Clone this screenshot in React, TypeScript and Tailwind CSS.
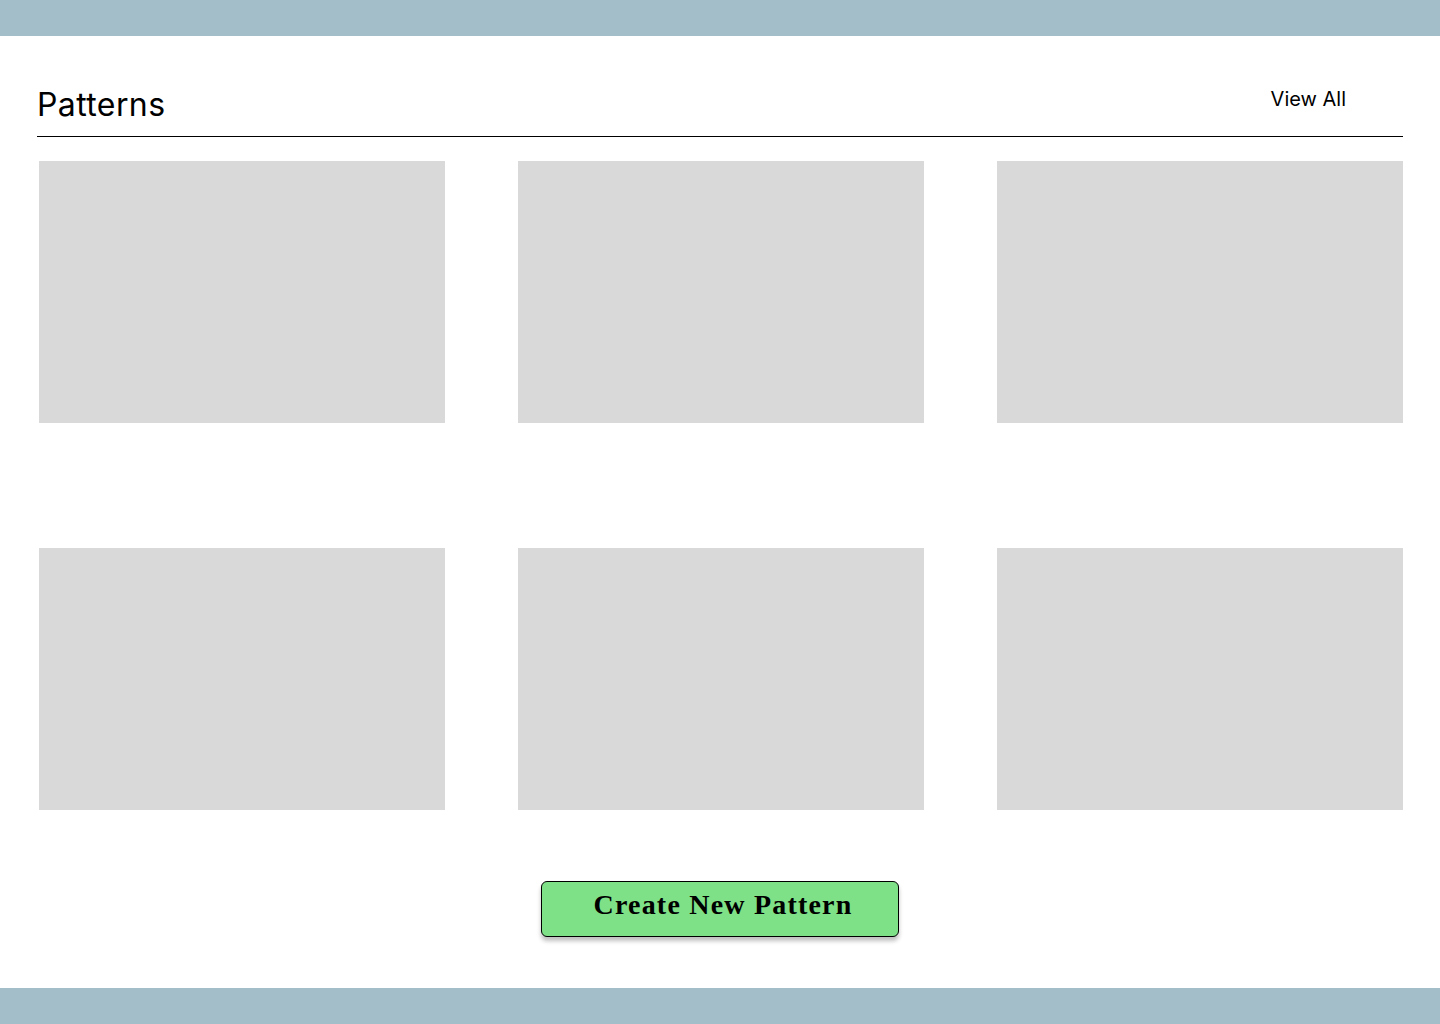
export default function App() {
  const cards = [1, 2, 3, 4, 5, 6];

  return (
    <div className="min-h-screen flex flex-col bg-white font-['Inter',sans-serif] text-black">
      {/* Top bar */}
      <div className="h-[36px] bg-[#a3bdc9]" />

      <main className="flex-1 flex flex-col px-[37px] pt-[53px]">
        {/* Header */}
        <div className="flex items-start justify-between border-b border-black pb-[15px]">
          <h1 className="text-[32px] leading-none font-normal tracking-[0.4px]">Patterns</h1>
          <a className="text-[20px] leading-none mr-[57px] cursor-pointer">View All</a>
        </div>

        {/* Pattern grid */}
        <div className="grid grid-cols-3 gap-x-[73px] gap-y-[125px] mt-[24px] pl-[2px]">
          {cards.map((c) => (
            <div key={c} className="h-[262px] bg-[#d9d9d9]" />
          ))}
        </div>

        <div className="flex justify-center mt-[71px]">
          <button
            type="button"
            className="w-[358px] h-[56px] rounded-[6px] border border-black bg-[#7ee187] shadow-[0_4px_4px_rgba(0,0,0,0.25)] font-['Liberation_Serif',serif] font-bold text-[28px] tracking-[1.2px] pl-[6px] pb-[8px]"
          >
            Create New Pattern
          </button>
        </div>
      </main>

      {/* Bottom bar */}
      <div className="h-[36px] bg-[#a3bdc9]" />
    </div>
  );
}
